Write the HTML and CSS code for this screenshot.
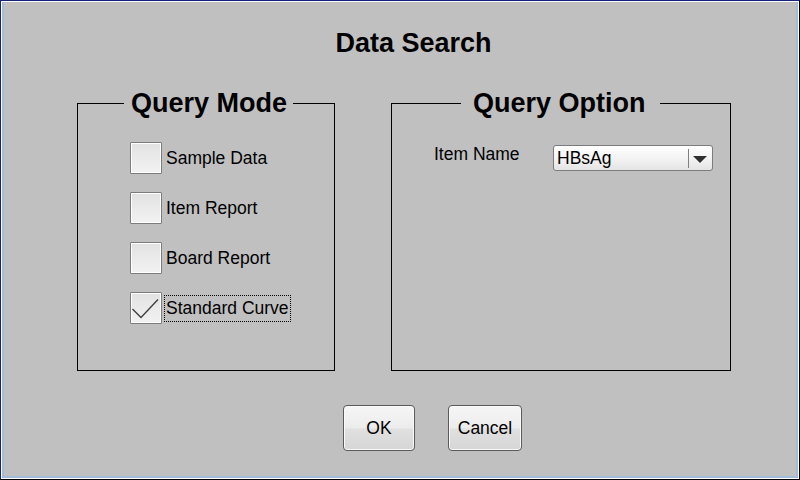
FILE: index.html
```html
<!DOCTYPE html>
<html lang="en">
<head>
    <meta charset="UTF-8">
    <meta name="viewport" content="width=device-width, initial-scale=1.0">
    <title>Data Search</title>
    <link rel="stylesheet" href="styles.css">
</head>
<body>
    <div class="window">
        <div class="frame">
            <div class="pane">
                <h1 class="title">Data Search</h1>

                <div class="groups">
                    <fieldset class="group group-mode">
                        <legend>Query Mode</legend>
                        <div class="checks">
                            <div class="check">
                                <span class="box"></span>
                                <span class="check-label">Sample Data</span>
                            </div>
                            <div class="check">
                                <span class="box"></span>
                                <span class="check-label">Item Report</span>
                            </div>
                            <div class="check">
                                <span class="box"></span>
                                <span class="check-label">Board Report</span>
                            </div>
                            <div class="check">
                                <span class="box">
                                    <svg width="32" height="32" viewBox="0 0 32 32">
                                        <polyline points="2.5,17 11,25.5 28,7.5" fill="none" stroke="#404040" stroke-width="1.4"/>
                                    </svg>
                                </span>
                                <span class="check-label focused">Standard Curve</span>
                            </div>
                        </div>
                    </fieldset>

                    <fieldset class="group group-option">
                        <legend>Query Option</legend>
                        <div class="field">
                            <span class="field-label">Item Name</span>
                            <div class="combo">
                                <span class="combo-value">HBsAg</span>
                                <span class="combo-arrow"></span>
                            </div>
                        </div>
                    </fieldset>
                </div>

                <div class="actions">
                    <button class="btn btn-ok">OK</button>
                    <button class="btn btn-cancel">Cancel</button>
                </div>
            </div>
        </div>
    </div>
</body>
</html>
```

FILE: styles.css
```css
html, body {
    margin: 0;
    padding: 0;
}
body {
    width: 800px;
    height: 480px;
    overflow: hidden;
    font-family: "Liberation Sans", Arial, sans-serif;
    color: #000;
}
.window {
    box-sizing: border-box;
    width: 800px;
    height: 480px;
    border: 1px solid;
    border-color: #14227a #000 #000 #14227a;
}
.frame {
    height: 100%;
    box-sizing: border-box;
    border: 1px solid #fff;
}
.pane {
    height: 100%;
    box-sizing: border-box;
    border: 2px solid #a4bcdc;
    border-top: 0;
    background-color: #c0c0c0;
    padding-top: 25px;
}
.title {
    margin: 0;
    padding-left: 27px;
    text-align: center;
    font-size: 27px;
    line-height: 32px;
    font-weight: bold;
}
.groups {
    display: flex;
    gap: 56px;
    margin-top: 28px;
    padding-left: 73px;
}
.group {
    box-sizing: border-box;
    margin: 0;
    padding: 0;
    height: 284px;
    border: 1px solid #000;
}
.group legend {
    font-size: 27px;
    line-height: 32px;
    font-weight: bold;
}
.group-mode {
    width: 258px;
}
.group-mode legend {
    margin-left: 46px;
    padding: 0 6px 0 7px;
}
.checks {
    display: flex;
    flex-direction: column;
    gap: 18px;
    padding: 23px 0 0 52px;
}
.group-option {
    width: 340px;
}
.group-option legend {
    margin-left: 69px;
    padding: 0 14px 0 12px;
}
.check {
    display: flex;
    align-items: center;
    height: 32px;
}
.box {
    box-sizing: border-box;
    width: 32px;
    height: 32px;
    border: 1px solid #7c7c7c;
    border-radius: 1px;
    box-shadow: inset 0 0 0 1px #fff;
    background: linear-gradient(#e2e2e2, #f2f2f2);
    position: relative;
}
.box svg {
    position: absolute;
    left: -1px;
    top: -1px;
}
.check-label {
    margin-left: 2px;
    padding: 2px 1px 3px;
    border: 1px dotted transparent;
    font-size: 17.5px;
    line-height: 20px;
}
.check-label.focused {
    border-color: #000;
}
.field {
    display: flex;
    align-items: flex-start;
    padding: 26px 0 0 42px;
}
.field-label {
    width: 119px;
    font-size: 17.5px;
    line-height: 20px;
    margin-top: -1px;
}
.combo {
    box-sizing: border-box;
    width: 160px;
    height: 26px;
    border: 1px solid #7c7c7c;
    border-radius: 3px;
    background: linear-gradient(#ffffff, #f4f4f4 50%, #e4e4e4);
    display: flex;
    align-items: center;
}
.combo-value {
    flex: 1;
    padding-left: 3px;
    font-size: 17.5px;
    line-height: 22px;
}
.combo-arrow {
    width: 23px;
    height: 19px;
    border-left: 1px solid #808080;
    position: relative;
}
.combo-arrow::after {
    content: "";
    position: absolute;
    left: 4px;
    top: 7px;
    border-left: 7px solid transparent;
    border-right: 7px solid transparent;
    border-top: 7px solid #303030;
}
.actions {
    display: flex;
    gap: 33px;
    margin-top: 34px;
    padding-left: 339px;
}
.btn {
    box-sizing: border-box;
    height: 46px;
    padding: 0;
    border: 1px solid #5a5a5a;
    border-radius: 4px;
    box-shadow: inset 0 0 0 1px #fafafa;
    background: linear-gradient(#f6f6f6, #ececec 50%, #e0e0e0 52%, #d6d6d6);
    font-family: "Liberation Sans", Arial, sans-serif;
    font-size: 17.5px;
    color: #000;
    cursor: pointer;
}
.btn-ok {
    width: 72px;
}
.btn-cancel {
    width: 74px;
}
```
